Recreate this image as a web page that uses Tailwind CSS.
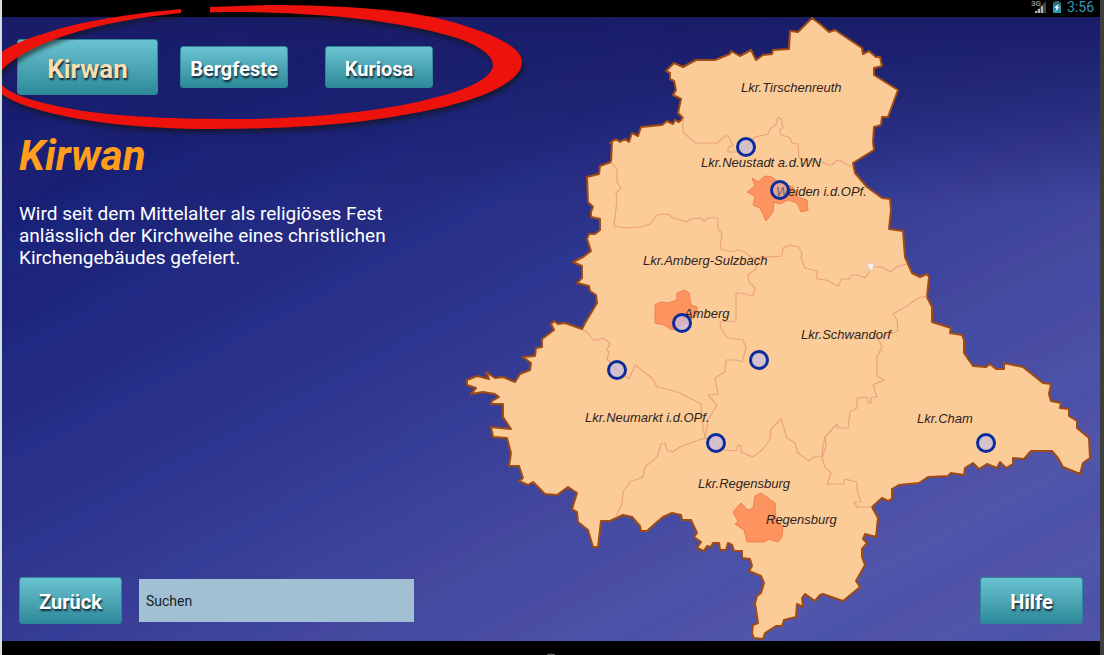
<!DOCTYPE html>
<html lang="de">
<head>
<meta charset="utf-8">
<meta name="viewport" content="width=device-width, initial-scale=1">
<title>Kirwan</title>
<script src="https://cdn.jsdelivr.net/npm/@tailwindcss/browser@4"></script>
</head>
<body class="relative flex min-h-screen flex-col overflow-x-hidden border-r-4 border-l-2 border-r-[#3e3e3c] border-l-[#d5dfe0] bg-black font-['Roboto',sans-serif]">

<!-- Status bar -->
<header class="flex h-[17px] items-center justify-end gap-1 pr-1.5 pb-1">
  <svg class="h-[15px] w-4" viewBox="0 0 16 15" aria-hidden="true">
    <text x="0" y="7" font-size="8" font-weight="700" fill="#8a8a8a" font-family="Roboto, sans-serif">3G</text>
    <path d="M15 2V14H3Z" fill="#444"/>
    <path d="M4 14V12H6V14ZM7 14V10H9V14ZM10 14V7H12V14Z" fill="#b5b5b5"/>
  </svg>
  <svg class="h-[15px] w-3" viewBox="0 0 12 15" aria-hidden="true">
    <path d="M4 2H8V3.500H10V14H2V3.500H4Z" fill="#2a95b5"/>
    <path d="M4 2H8V3.500H10V6H2V3.500H4Z" fill="#35606c"/>
    <path d="M7.500 4.500L3.500 9H5.500L4.500 12.500L8.500 8H6.500Z" fill="#fff"/>
  </svg>
  <time class="text-sm leading-none text-[#3597b8]">3:56</time>
</header>

<main class="relative flex flex-1 bg-[linear-gradient(to_bottom,#191d68_0%,#191d6800_30%),repeating-linear-gradient(152deg,#2840b000_0px,#2840b024_34px,#50309018_52px,#2840b000_90px),linear-gradient(152deg,#141b70_0%,#182176_20%,#2e358c_46%,#444a9f_66%,#5056aa_82%,#5056aa_100%)]">

  <section class="flex w-[458px] shrink-0 flex-col pt-[22px] pb-[17px]">
    <nav class="flex items-center pl-[15px]" aria-label="Kategorien">
      <button class="h-14 w-[141px] rounded-[3px] border border-[#2f8797] bg-linear-to-b from-[#6ac3d1] to-[#2c8a9a] pt-1 text-[26px] font-bold text-[#f8deb0] [text-shadow:1px_2px_2px_#123]">Kirwan</button>
      <button class="ml-[22px] h-[42px] w-[108px] rounded-[3px] border border-[#2f8797] bg-linear-to-b from-[#6ac3d1] to-[#2c8a9a] pt-1 text-xl font-bold text-white [text-shadow:1px_2px_2px_#123]">Bergfeste</button>
      <button class="ml-[37px] h-[42px] w-[108px] rounded-[3px] border border-[#2f8797] bg-linear-to-b from-[#6ac3d1] to-[#2c8a9a] pt-1 text-xl font-bold text-white [text-shadow:1px_2px_2px_#123]">Kuriosa</button>
    </nav>
    <h1 class="mt-[39px] pl-[17px] text-[42px] leading-[44px] font-bold text-[#ff9d1c] italic">Kirwan</h1>
    <p class="mt-[25px] w-[400px] pl-[17px] text-[19px] leading-[22px] text-white">Wird seit dem Mittelalter als religiöses Fest anlässlich der Kirchweihe eines christlichen Kirchengebäudes gefeiert.</p>
    <form class="mt-auto flex items-center gap-[17px] pl-[17px]">
      <button type="button" class="h-[47px] w-[103px] rounded-[3px] border border-[#2f8797] bg-linear-to-b from-[#6ac3d1] to-[#2c8a9a] pt-0.5 text-xl font-bold text-white [text-shadow:1px_2px_2px_#123]">Zurück</button>
      <input type="text" aria-label="Suchen" placeholder="Suchen" class="h-[43px] w-[275px] bg-[#a2c0d3] px-[7px] text-sm text-[#14222c] placeholder:text-[#14222c]">
    </form>
  </section>

  <!-- District map -->
  <svg class="min-w-0 flex-1 self-start" viewBox="460 17 640 624" role="group" aria-label="Karte der Oberpfalz">
    <path fill="#fccc98" stroke="#a04a14" stroke-width="2" stroke-linejoin="round" d="M812 18L820 24L829 32L835 30L850 40L862 48L863 54L869 51L876 57L880 57L882 66L874 68L874 75L898 90L888 117L882 117L881 125L874 127L873 142L874 150L853 163L855 173L867 187L882 198L890 199L891 210L889 229L903 231L905 257L912 273L920 277L927 274L929 277L927 297L932 307L932 322L951 328L950 333L962 335L964 340L964 353L973 366L986 367L990 364L996 369L1004 369L1004 363L1023 367L1043 383L1051 384L1049 394L1051 401L1061 403L1060 408L1069 409L1069 416L1077 421L1077 428L1089 438L1090 458L1083 463L1080 474L1063 467L1058 458L1052 451L1031 451L1024 459L1013 458L1013 464L1006 468L1000 462L997 468L987 464L979 469L973 463L965 468L964 475L951 473L948 476L928 477L919 483L899 485L892 489L892 499L888 501L882 498L872 507L878 518L876 537L865 534L863 539L867 543L862 549L862 557L865 565L856 581L860 587L843 601L823 594L820 595L815 601L805 594L802 598L803 607L797 604L796 617L784 620L782 626L776 626L765 633L763 639L754 638L752 633L753 625L758 623L755 603L757 596L761 593L764 583L761 576L749 571L752 566L750 559L742 558L742 551L734 551L732 545L728 543L726 550L720 550L719 543L713 543L711 547L707 546L704 551L697 548L701 542L694 537L697 533L691 520L682 520L681 515L672 513L663 517L657 522L647 531L641 531L640 526L632 517L623 515L610 521L601 521L598 547L593 547L588 530L578 522L577 512L572 509L577 493L568 487L557 495L545 494L533 482L528 485L519 481L523 478L519 466L509 466L511 453L507 438L493 437L491 427L511 429L503 417L503 404L491 404L492 401L499 397L495 394L483 392L471 394L476 388L467 385L467 380L477 376L489 379L486 372L495 378L503 377L515 382L520 374L530 370L531 363L523 357L535 356L536 348L542 347L542 339L554 330L551 324L554 321L558 324L565 323L582 329L585 323L597 303L596 295L590 291L589 286L577 283L582 278L582 266L573 262L583 257L591 251L587 239L589 234L595 234L600 230L600 219L591 217L591 212L593 207L588 202L587 177L599 174L600 166L611 162L612 143L610 143L616 139L620 142L625 139L629 142L632 133L638 136L641 127L662 125L667 121L673 124L675 120L679 122L683 118L678 113L681 99L673 95L676 90L674 81L670 79L670 73L666 71L674 63L683 67L696 60L715 60L730 54L731 51L740 56L751 50L756 60L763 55L772 54L773 50L789 49L790 31L798 32Z"/>

    <!-- District borders -->
    <g fill="none" stroke="#eba27b" stroke-width="1.200" stroke-linejoin="round">
      <path d="M683 118V132L695 143H717L725 136H728L733 145L728 148V152H737L746 147L755 137L768 134L771 128L776 125L778 117L781 119L783 128L780 129V134L790 138L792 143L798 144L799 158L815 162H823L828 165H832L836 161L840 160L846 164L853 167"/>
      <path d="M611 162L617 170V182L621 188L616 193L617 200L614 226L625 228L640 227L650 224L657 215L668 214L673 218L687 222L690 219L701 218L704 221L708 218H718V229L722 233L720 249L732 252L738 250L745 252L752 258L782 256L783 248L790 245L798 247L802 252L801 258L805 268L817 271V279L826 280L838 286L842 279H849L852 275H858L865 278L872 267H882L890 272L898 266L907 264"/>
      <path d="M758 259L756 269L748 275L749 282L755 288L753 296L740 293H736V321L720 322L721 328L727 338L743 340L746 348L742 362L736 360H726L725 372L715 378L718 394L708 395L717 405L708 420L707 427L705 438"/>
      <path d="M583 330L587 332L593 340H598L603 338L610 343L607 350L609 352L607 359L617 370L629 379L635 365L652 378L657 387L670 390L680 393L701 404L702 420L705 438L693 442L680 447L673 452L667 450L665 443L661 444L657 457L645 467L643 477L630 482L623 492L622 503L616 517"/>
      <path d="M705 438L716 443L725 450L736 451L738 445L741 446V452L753 457L762 450L770 440L771 429L781 419L787 438L795 443L798 453L809 461L814 457L822 456L823 446L825 437L837 424L838 428H848L850 412L857 408V398L867 397L868 403L871 403V397H877L873 385L884 380L877 376V357L882 347L878 338L898 331L897 320L893 314L907 306L918 298L927 296"/>
      <path d="M825 437L826 446L822 458L825 467L831 473L827 484H843L845 479L857 482V490L861 502L854 502L857 507H872"/>
    </g>

    <!-- Independent cities -->
    <g fill="#fd945f" stroke="#f17f50" stroke-width="1" stroke-linejoin="round">
      <path d="M747 192L755 186L752 178L758 182L765 176L772 177L779 183L793 187L798 197L807 200L808 210L801 212L797 203L788 200L780 204L774 202L773 212L766 221L760 208L753 205L755 196Z"/>
      <path d="M655 305L660 302L668 303L677 300V293L685 290L689 293L691 305L697 307V315L688 322L672 330L664 325L655 323Z"/>
      <path d="M733 512L741 503L748 510L753 508L755 496L761 493L768 498L775 503L776 520L783 527L782 537L778 542L769 539L764 542L747 542L744 530L735 524L738 521Z"/>
    </g>
    <path d="M867 264L874 263L873 269L870 271Z" fill="#f3f0ec" stroke="#d7c3b3" stroke-width=".5"/>

    <g font-family="'Liberation Sans', Arial, sans-serif" font-size="13" font-style="italic" fill="#2f231c">
      <text x="741" y="92">Lkr.Tirschenreuth</text>
      <text x="701" y="167">Lkr.Neustadt a.d.WN</text>
      <text x="776" y="196">Weiden i.d.OPf.</text>
      <text x="643" y="265">Lkr.Amberg-Sulzbach</text>
      <text x="684" y="318">Amberg</text>
      <text x="801" y="339">Lkr.Schwandorf</text>
      <text x="585" y="422">Lkr.Neumarkt i.d.OPf.</text>
      <text x="917" y="423">Lkr.Cham</text>
      <text x="698" y="488">Lkr.Regensburg</text>
      <text x="766" y="524">Regensburg</text>
    </g>

    <g fill="#c8bce0" fill-opacity=".75" stroke="#0c2c9c" stroke-width="3">
      <a href="#neustadt" aria-label="Neustadt a.d.WN"><circle cx="746" cy="147" r="8.500"/></a>
      <a href="#weiden" aria-label="Weiden i.d.OPf."><circle cx="780" cy="190" r="8.500" fill-opacity=".4"/></a>
      <a href="#amberg" aria-label="Amberg"><circle cx="682" cy="323" r="8.500"/></a>
      <a href="#neumarkt" aria-label="Neumarkt i.d.OPf."><circle cx="617" cy="370" r="8.500"/></a>
      <a href="#schwandorf" aria-label="Schwandorf"><circle cx="759" cy="360" r="8.500"/></a>
      <a href="#regensburg" aria-label="Regensburg"><circle cx="716" cy="443" r="8.500"/></a>
      <a href="#cham" aria-label="Cham"><circle cx="986" cy="443" r="8.500"/></a>
    </g>
  </svg>

  <button class="absolute right-[17px] bottom-[17px] h-[47px] w-[103px] rounded-[3px] border border-[#2f8797] bg-linear-to-b from-[#6ac3d1] to-[#2c8a9a] pt-0.5 text-xl font-bold text-white [text-shadow:1px_2px_2px_#123]">Hilfe</button>
</main>

<footer class="flex h-[14px] items-end bg-black">
  <svg class="mx-auto h-0.5 w-3" viewBox="0 0 12 2" aria-hidden="true"><path d="M2 2Q6 0 10 2" stroke="#777" fill="none"/></svg>
</footer>

<!-- Hand-drawn highlight around the category buttons -->
<svg class="pointer-events-none absolute top-0 -left-0.5 h-[140px] w-[530px] overflow-visible drop-shadow-[2px_4px_2px_rgba(20,20,20,0.6)]" viewBox="0 0 530 140" aria-hidden="true">
  <path fill="#ee120c" d="M181 9C117 15 75 23 43 34C15 42 -12 55 -12 73C-12 91 15 103 33 108C75 121 135 129 215 129C290 129 355 124 403 115C440 109 465 102 483 95C505 86 522 75 522 62C522 53 512 45 497 38C480 30 458 23 437 18C400 10 345 5 270 5L210 7V12.500C245 11 310 13 370 20C405 25 435 31 457 38C478 45 493 55 493 65C493 75 475 88 437 97C395 109 320 119 233 119C165 119 105 116 67 108C30 101 -1 92 -1 77C-1 65 35 45 67 35C100 24 140 17 181 13Z"/>
</svg>
</body>
</html>
